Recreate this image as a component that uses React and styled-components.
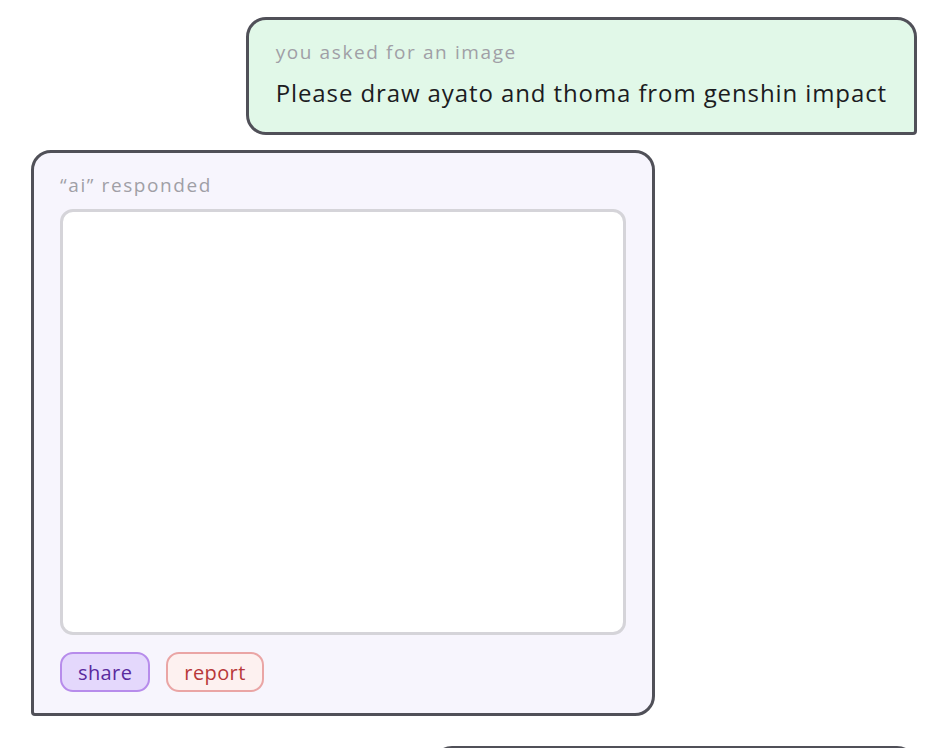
import * as React from "react";
import styled, { createGlobalStyle } from "styled-components";

const GlobalStyle = createGlobalStyle`
  html, body {
    margin: 0;
    padding: 0;
    background: #ffffff;
    font-family: "Open Sans", Lato, sans-serif;
  }
`;

const Thread = styled.main`
  display: flex;
  flex-direction: column;
  gap: 15px;
  padding: 17px 29px 0 31px;
  height: 748px;
  box-sizing: border-box;
  overflow: hidden;
`;

const Bubble = styled.section`
  box-sizing: border-box;
  border: 3px solid #505058;
  flex-shrink: 0;
`;

const UserBubble = styled(Bubble)`
  align-self: flex-end;
  background: #e1f8e8;
  border-radius: 20px 20px 4px 20px;
  padding: 19px 27px 23px 27px;
  width: ${(p) => p.$width || "auto"};
  margin-top: ${(p) => p.$offset || 0};
  min-height: ${(p) => p.$minHeight || "auto"};
`;

const AiBubble = styled(Bubble)`
  align-self: flex-start;
  width: 624px;
  background: #f7f5fd;
  border-radius: 20px 20px 20px 4px;
  padding: 19px 26px 21px 26px;
`;

const Label = styled.div`
  color: #a09fa6;
  font-size: 19px;
  line-height: 26px;
  letter-spacing: 1.6px;
`;

const Prompt = styled.div`
  color: #1c1c1f;
  font-size: 24px;
  line-height: 32px;
  margin-top: 12px;
  letter-spacing: 0.9px;
`;

const ImageFrame = styled.div`
  box-sizing: border-box;
  margin-top: 11px;
  height: 426px;
  background: #ffffff;
  border: 3px solid #d5d4d9;
  border-radius: 13px;
`;

const Actions = styled.div`
  display: flex;
  gap: 16px;
  margin-top: 17px;
`;

const tones = {
  purple: { bg: "#e4d8fc", border: "#b78ceb", text: "#5a2a9e" },
  red: { bg: "#fdf1f0", border: "#eaa5a5", text: "#b8383a" },
};

const ActionButton = styled.button`
  box-sizing: border-box;
  height: 40px;
  padding: 0 16px;
  border-radius: 13px;
  border: 2px solid ${(p) => tones[p.$tone].border};
  background: ${(p) => tones[p.$tone].bg};
  color: ${(p) => tones[p.$tone].text};
  font-family: inherit;
  font-size: 20px;
  letter-spacing: 0.4px;
  cursor: pointer;
`;

const App = () => {
  return (
    <>
      <GlobalStyle />
      <Thread>
        <UserBubble>
          <Label>you asked for an image</Label>
          <Prompt>Please draw ayato and thoma from genshin impact</Prompt>
        </UserBubble>

        <AiBubble>
          <Label>“ai” responded</Label>
          <ImageFrame />
          <Actions>
            <ActionButton $tone="purple">share</ActionButton>
            <ActionButton $tone="red">report</ActionButton>
          </Actions>
        </AiBubble>

        <UserBubble $width="485px" $offset="15px" $minHeight="100px" />
      </Thread>
    </>
  );
};

export default App;
